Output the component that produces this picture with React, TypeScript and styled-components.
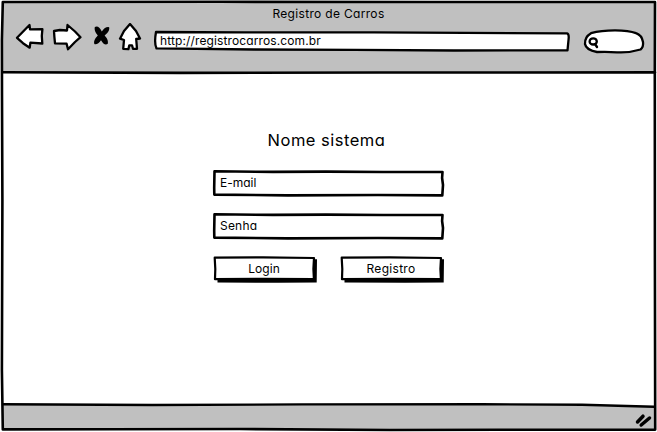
import React from "react";
import styled, { createGlobalStyle } from "styled-components";

const Global = createGlobalStyle`
  *, *::before, *::after { box-sizing: border-box; }
  html, body { margin: 0; background: #fff; overflow: hidden; }
  body { font-family: Inter, "Liberation Sans", sans-serif; font-weight: 400; font-feature-settings: "cv11", "calt" 0; color: #000; }
`;

const Sketch = styled.svg`
  position: absolute;
  inset: 0;
  width: 100%;
  height: 100%;
  overflow: visible;
  pointer-events: none;
  fill: none;
  stroke: #000;
  stroke-width: 2.6;
  stroke-linecap: round;
  stroke-linejoin: round;
`;

const Window = styled.div`
  position: relative;
  display: flex;
  flex-direction: column;
  width: 657px;
  height: 432px;
  padding: 1px 2px 3px;
`;

const Header = styled.header`
  height: 72px;
  background: #c0c0c0;
`;

const WindowTitle = styled.h1`
  margin: 0;
  padding: 4px 0 0;
  height: 22px;
  font-size: 12px;
  line-height: 18px;
  font-weight: 400;
  text-align: center;
  letter-spacing: 0.32px;
`;

const Toolbar = styled.div`
  display: flex;
  align-items: flex-start;
  height: 32px;
  padding-left: 12px;
`;

const NavIcons = styled.svg`
  flex: none;
  width: 130px;
  height: 32px;
  fill: #fff;
  stroke: #000;
  stroke-width: 2.3;
  stroke-linejoin: round;
  stroke-linecap: round;
`;

const Address = styled.div`
  position: relative;
  width: 416px;
  height: 20px;
  margin: 8px 0 0 10px;
  padding-left: 6px;
`;

const Search = styled.div`
  position: relative;
  width: 60px;
  height: 23px;
  margin: 7px 0 0 14px;
`;

const Label = styled.span<{ $spacing?: number }>`
  position: relative;
  display: block;
  white-space: nowrap;
  font-size: 12px;
  line-height: 20px;
  letter-spacing: ${(p) => p.$spacing ?? 0}px;
`;

const Content = styled.main`
  flex: 1;
  display: flex;
  flex-direction: column;
  align-items: flex-start;
  padding: 55px 0 0 211px;
`;

const SystemName = styled.h2`
  width: 230px;
  margin: 0 0 18px;
  padding-right: 3px;
  font-size: 16.5px;
  line-height: 24px;
  font-weight: 400;
  text-align: center;
  letter-spacing: 0.5px;
`;

const Field = styled.div`
  position: relative;
  width: 231px;
  height: 27px;
  margin-bottom: 16px;
  padding: 3px 0 0 7px;
`;

const Actions = styled.div`
  display: flex;
  gap: 24px;
`;

const Button = styled.button`
  position: relative;
  width: 103px;
  height: 27px;
  padding: 0 1px 2px 0;
  border: 0;
  background: transparent;
  color: inherit;
  font: inherit;
  font-feature-settings: inherit;
`;

const Footer = styled.footer`
  position: relative;
  height: 24px;
  background: #c0c0c0;
`;

function SketchField() {
  return (
    <Sketch viewBox="0 0 231 27" aria-hidden="true">
      <path fill="#fff" d="M1.5 1.3 L60 1.9 L113 1.6 L170 2 L229.5 2 L229.1 8 L230 15 L229.3 25.4 L165 25 L75 25.4 L1.3 24.6 L1.2 18 Z" />
    </Sketch>
  );
}

function SketchButton({ label, spacing }: { label: string; spacing: number }) {
  return (
    <Button>
      <Sketch viewBox="0 0 103 27" aria-hidden="true">
        <path fill="#000" stroke="none" d="M4.5 22 H99 V3.3 H104 L103.7 26.4 L65 26.8 L4.5 26.5 Z" />
        <path fill="#fff" strokeWidth="2.2" d="M1.7 1.7 L50 1.3 L101 2 L100.4 13 L100.9 23 L50 22.8 L2 23.2 L2.3 13 Z" />
      </Sketch>
      <Label $spacing={spacing}>{label}</Label>
    </Button>
  );
}

export default function App() {
  return (
    <>
      <Global />
      <Window>
        <Header>
          <WindowTitle>Registro de Carros</WindowTitle>
          <Toolbar>
            <NavIcons viewBox="14 23 130 32" aria-label="Navegação">
              <path d="M17 37.8 L29.5 25 L30 29.4 L42.4 29.2 L41.8 36 L42.3 43.5 L30.4 42.7 L29.7 47.7 L23 43.2 Z" />
              <path d="M54 31 L60 30 L67 30.5 L67.5 25 L75 31.5 L80.5 37.2 L75 42 L68 49.3 L66.6 43.7 L55 43.3 L54.4 37 Z" />
              <path fill="#000" stroke="none" d="M94.8 27 Q98.5 24.8 101.8 31.4 Q105.5 26.2 109.2 27.2 Q110.2 31.5 104.6 35.4 Q108.6 39.5 107.8 43.8 Q104.3 46 101 40.2 Q97.8 45 94.3 44 Q93 40.5 97.8 35.6 Q93.8 31 94.8 27 Z" />
              <path d="M130 24 L136 31 L140 38.5 L136.2 39 L137 48.8 L133 48.8 L132 45.3 L129.3 45.3 L128.4 49.2 L123.2 48.8 L124 40 L120 38.7 L124 31 Z" />
            </NavIcons>
            <Address>
              <Sketch viewBox="0 0 416 20" aria-hidden="true">
                <path fill="#fff" strokeWidth="2.3" d="M2 1 L90 1.4 L220 1.3 L413 2.4 Q415.2 3 414.6 8 L413.5 19.4 L300 19.5 L200 18.9 L100 18.5 L2.5 17.4 Q0 12 2 1 Z" />
              </Sketch>
              <Label $spacing={0.12}>http://registrocarros.com.br</Label>
            </Address>
            <Search>
              <Sketch viewBox="0 0 60 23" aria-hidden="true">
                <path fill="#fff" strokeWidth="2.3" d="M7 3.2 Q17 .4 31 .4 Q45 .6 52 3.2 Q57.8 5.2 59 12 Q59.7 17 56.5 19.5 Q45 23 33 22.3 Q23 21.5 13 22 Q2 20 1 14 Q.5 7 7 3.2 Z" />
                <ellipse cx="9.2" cy="11.4" rx="3.6" ry="3.1" strokeWidth="2.3" />
                <path strokeWidth="2.4" d="M11 14 L13 17" />
              </Sketch>
            </Search>
          </Toolbar>
        </Header>
        <Content>
          <SystemName>Nome sistema</SystemName>
          <Field><SketchField /><Label>E-mail</Label></Field>
          <Field><SketchField /><Label $spacing={0.2}>Senha</Label></Field>
          <Actions>
            <SketchButton label="Login" spacing={0.05} />
            <SketchButton label="Registro" spacing={0.3} />
          </Actions>
        </Content>
        <Footer>
          <Sketch viewBox="0 0 653 24" aria-hidden="true">
            <path fill="#fff" stroke="none" d="M450 -1 L653 -1 L653 2 Z" />
            <path strokeWidth="2.4" d="M1 -.7 L150 0 L300 -.6 L480 -.8 L580 -.2 L652 1.8" />
            <path strokeWidth="3.5" d="M635.5 17 L641 11.2 M639.2 20 L647.5 13" />
          </Sketch>
        </Footer>
        <Sketch viewBox="0 0 657 432" aria-hidden="true">
          <path d="M2.8 2 L220 1.8 L430 2 L655 2 L654.8 75 L654.9 260 L655.2 429.6 L500 429.8 L390 430 L240 429 L110 429.3 L2.8 429.4 L1.9 370 L2.4 200 L2 95 L1.9 40 Z" />
          <path d="M3 72.3 L180 72.9 L380 72.5 L655 72.4" />
        </Sketch>
      </Window>
    </>
  );
}
